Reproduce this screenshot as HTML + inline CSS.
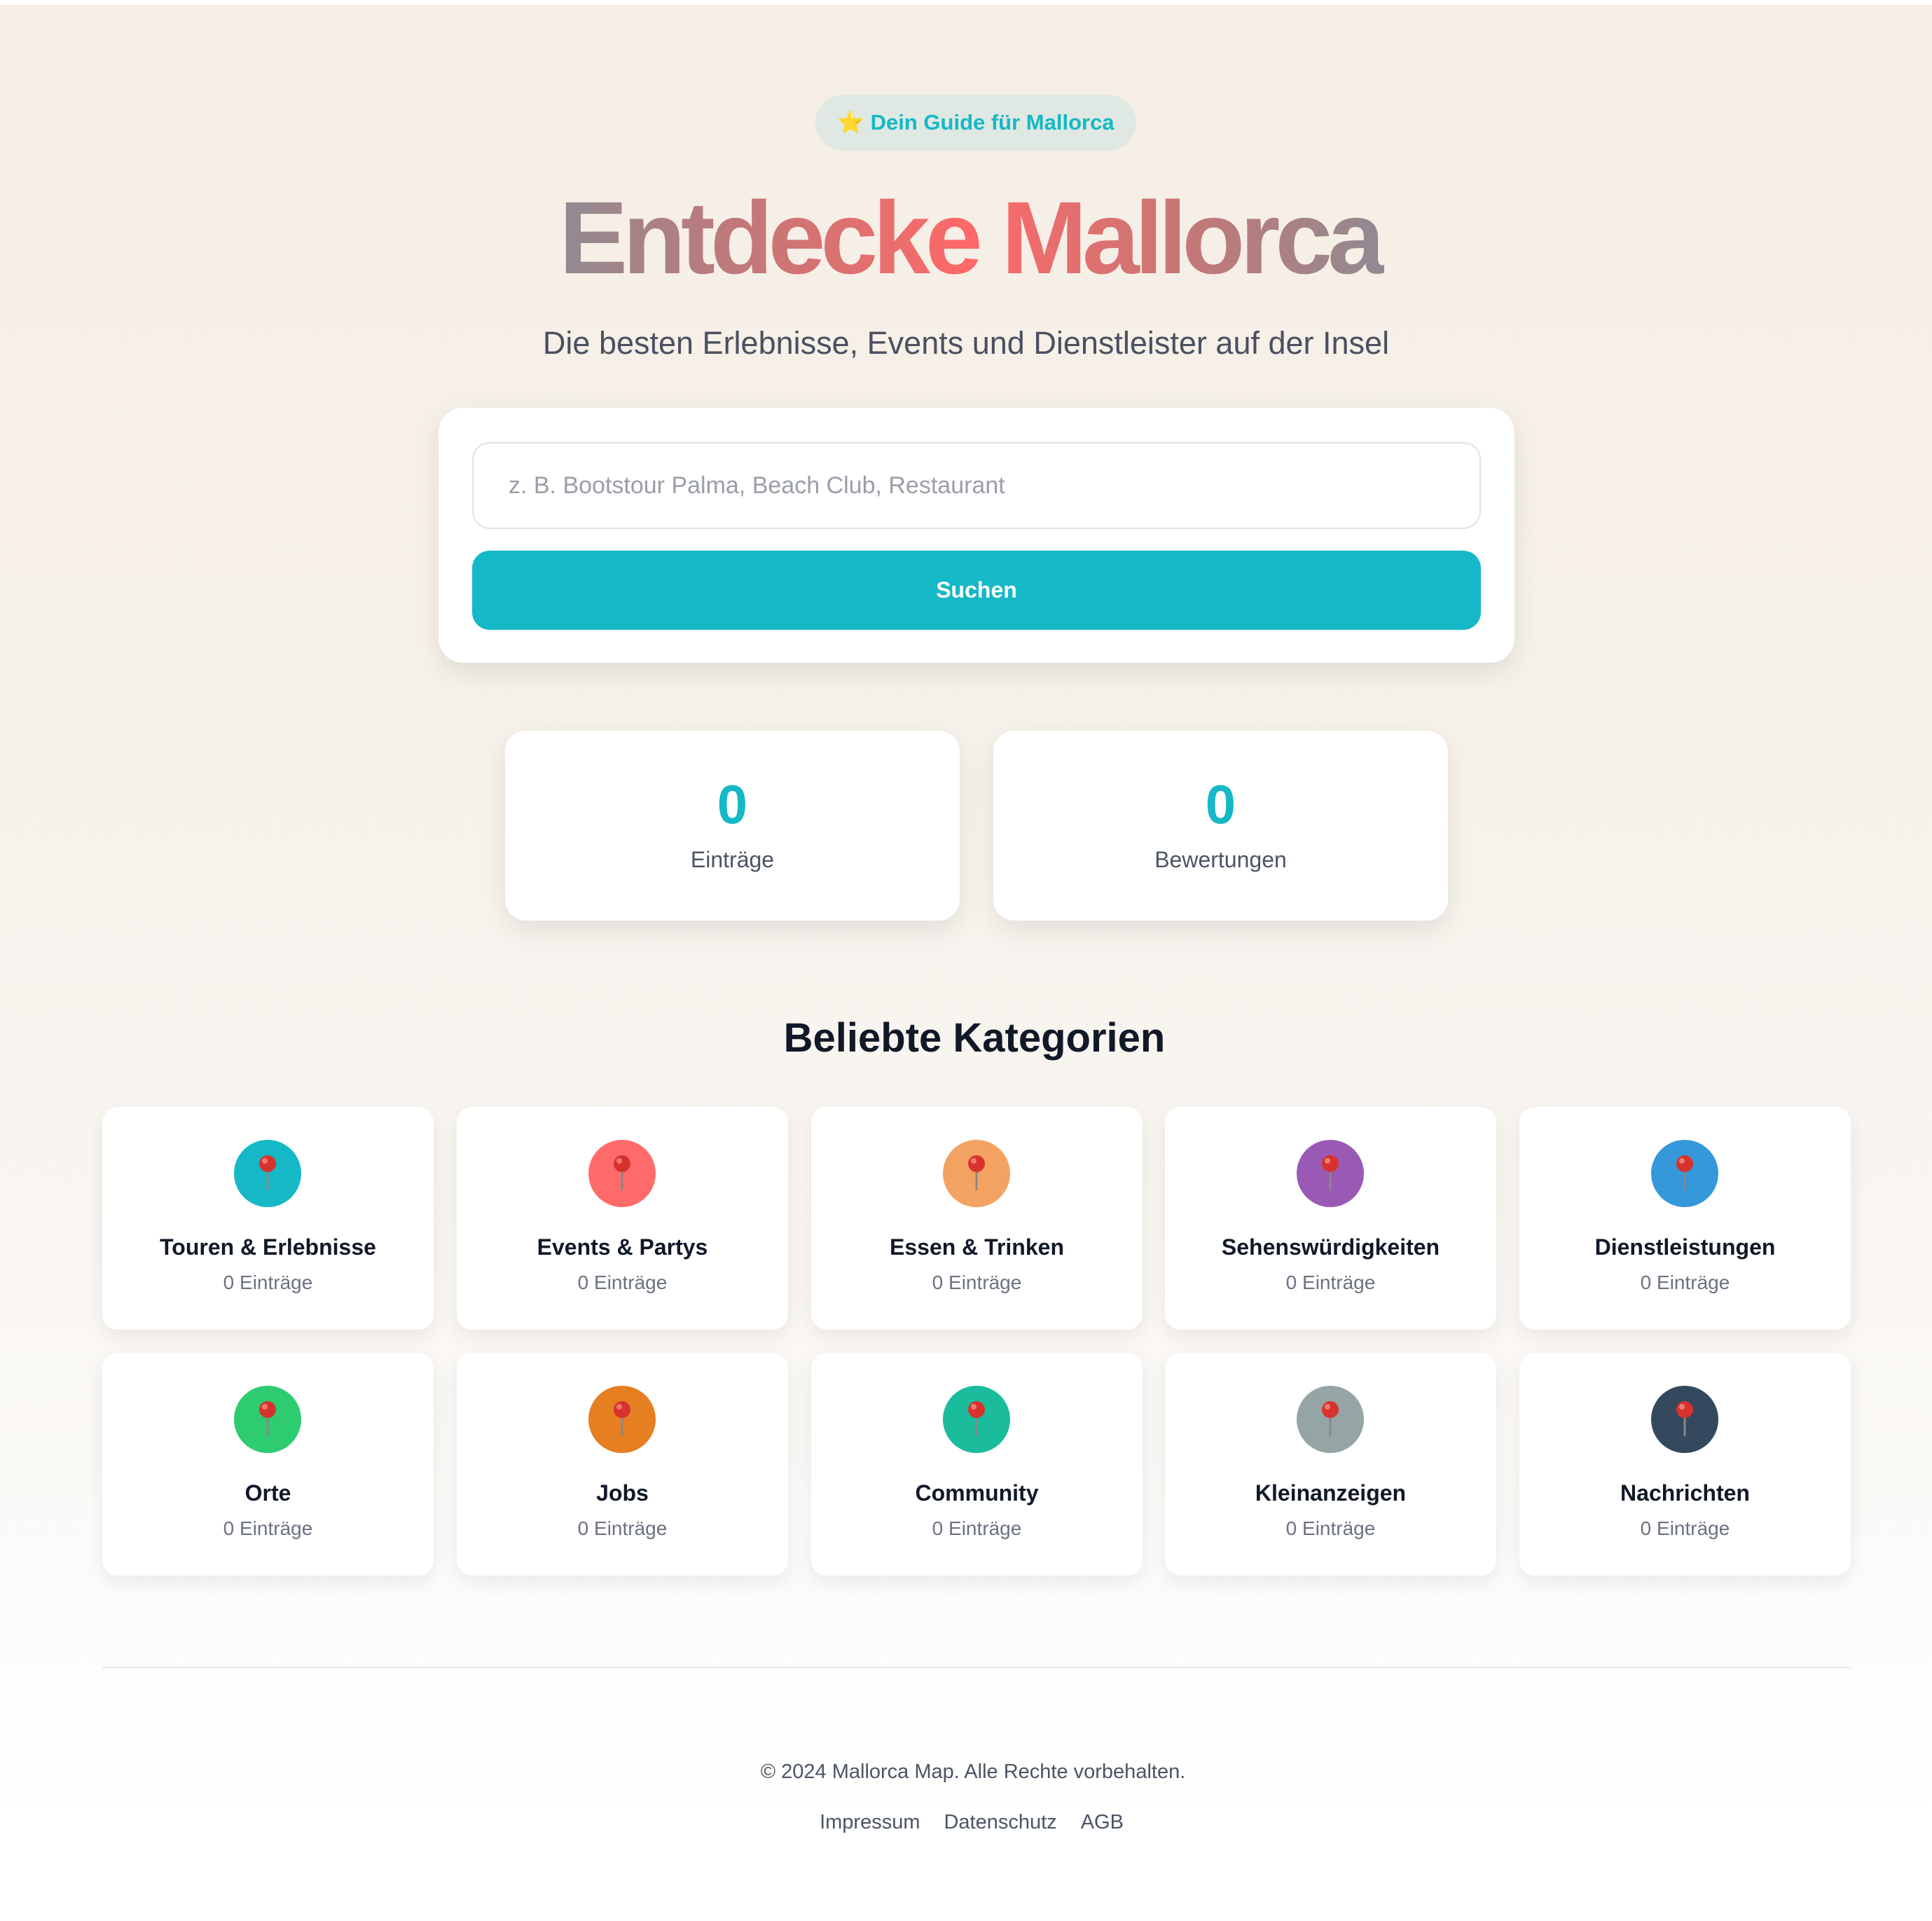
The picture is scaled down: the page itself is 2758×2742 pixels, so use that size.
<!DOCTYPE html>
<html><head><meta charset="utf-8"><style>
*{box-sizing:border-box;margin:0;padding:0}
body{width:2758px;height:2742px;overflow:hidden;font-family:"Liberation Sans",sans-serif;background:linear-gradient(#f5eee5 0px,#f6f1ea 1000px,#f9f6f2 1800px,#ffffff 2600px);position:relative}
.top{position:absolute;left:0;top:0;width:2758px;height:7px;background:#fff}
.abs{position:absolute}
.badge{left:1164px;top:135px;width:458px;height:80px;border-radius:40px;background:#dfe8e3;color:#15b8c6;font-size:31px;font-weight:bold;line-height:80px;text-align:center}
h1{position:absolute;left:0;width:2758px;top:252px;padding-left:12px;text-align:center;font-size:147px;font-weight:bold;letter-spacing:-7px;line-height:176px}
h1 span{display:inline-block;padding:0 6px 0 4px;background:linear-gradient(90deg,#8f8b93 0%,#c87676 25%,#ff6868 50%,#c87676 75%,#8f8b93 100%);-webkit-background-clip:text;background-clip:text;color:transparent}
.sub{left:0;width:2758px;top:460px;font-size:45px;color:#4a5060;text-align:center;line-height:60px}
.card{background:#fff;border-radius:35px;box-shadow:0 14px 40px rgba(0,0,0,.09)}
.input{left:674px;top:631px;width:1440px;height:124px;border:2px solid #e3e3e6;border-radius:25px;background:#fff;font-size:34px;color:#9a9ea8;line-height:120px;padding-left:50px}
.btn{left:674px;top:786px;width:1440px;height:113px;border-radius:25px;background:#15b8c6;color:#fff;font-size:32px;font-weight:bold;line-height:113px;text-align:center}
.stat{width:649px;height:271px;top:1043px;border-radius:30px;text-align:center}
.stat .n{position:absolute;left:0;right:0;top:60px;font-size:78px;font-weight:bold;color:#15b8c6;line-height:90px}
.stat .l{position:absolute;left:0;right:0;top:164px;font-size:32px;color:#4b5563;line-height:40px}
h2{position:absolute;left:12px;width:2758px;top:1446px;text-align:center;font-size:58px;font-weight:bold;color:#111827;line-height:72px}
.cat{width:473px;height:318px;border-radius:22px;text-align:center;box-shadow:0 10px 28px rgba(0,0,0,.07)}
.cat .ic{position:absolute;left:188px;top:47px;width:96px;height:96px;border-radius:50%}
.cat .ic svg{position:absolute;left:0;top:0}
.cat .t{position:absolute;left:0;right:0;top:180px;font-size:32px;font-weight:bold;color:#111827;line-height:40px}
.cat .s{position:absolute;left:0;right:0;top:233px;font-size:28px;color:#6b7280;line-height:36px}
.line{left:146px;top:2379px;width:2496px;height:2px;background:#e8e8ea}
.copy{left:10px;width:2758px;top:2511px;text-align:center;font-size:29px;color:#4b5563;line-height:36px}
.links{left:8px;width:2758px;top:2583px;text-align:center;font-size:29px;color:#4b5563;line-height:36px}
.links span{margin:0 17px}
</style></head><body>
<div class="top"></div>
<div class="abs badge">⭐ Dein Guide für Mallorca</div>
<h1><span>Entdecke Mallorca</span></h1>
<div class="abs sub">Die besten Erlebnisse, Events und Dienstleister auf der Insel</div>
<div class="abs card" style="left:626px;top:582px;width:1536px;height:364px"></div>
<div class="abs input">z. B. Bootstour Palma, Beach Club, Restaurant</div>
<div class="abs btn">Suchen</div>
<div class="abs card stat" style="left:721px"><div class="n">0</div><div class="l">Einträge</div></div>
<div class="abs card stat" style="left:1418px"><div class="n">0</div><div class="l">Bewertungen</div></div>
<h2>Beliebte Kategorien</h2>

<div class="abs card cat" style="left:146px;top:1580px"><div class="ic" style="background:#15b8c6"><svg width="96" height="96"><line x1="48" y1="40" x2="48" y2="72" stroke="#888" stroke-width="3"/><circle cx="48" cy="34" r="12" fill="#d8322e"/><circle cx="44" cy="30" r="4" fill="#f07a72"/></svg></div><div class="t">Touren &amp; Erlebnisse</div><div class="s">0 Einträge</div></div>
<div class="abs card cat" style="left:652px;top:1580px"><div class="ic" style="background:#ff6b6b"><svg width="96" height="96"><line x1="48" y1="40" x2="48" y2="72" stroke="#888" stroke-width="3"/><circle cx="48" cy="34" r="12" fill="#d8322e"/><circle cx="44" cy="30" r="4" fill="#f07a72"/></svg></div><div class="t">Events &amp; Partys</div><div class="s">0 Einträge</div></div>
<div class="abs card cat" style="left:1158px;top:1580px"><div class="ic" style="background:#f4a261"><svg width="96" height="96"><line x1="48" y1="40" x2="48" y2="72" stroke="#888" stroke-width="3"/><circle cx="48" cy="34" r="12" fill="#d8322e"/><circle cx="44" cy="30" r="4" fill="#f07a72"/></svg></div><div class="t">Essen &amp; Trinken</div><div class="s">0 Einträge</div></div>
<div class="abs card cat" style="left:1663px;top:1580px"><div class="ic" style="background:#9b59b6"><svg width="96" height="96"><line x1="48" y1="40" x2="48" y2="72" stroke="#888" stroke-width="3"/><circle cx="48" cy="34" r="12" fill="#d8322e"/><circle cx="44" cy="30" r="4" fill="#f07a72"/></svg></div><div class="t">Sehenswürdigkeiten</div><div class="s">0 Einträge</div></div>
<div class="abs card cat" style="left:2169px;top:1580px"><div class="ic" style="background:#3498db"><svg width="96" height="96"><line x1="48" y1="40" x2="48" y2="72" stroke="#888" stroke-width="3"/><circle cx="48" cy="34" r="12" fill="#d8322e"/><circle cx="44" cy="30" r="4" fill="#f07a72"/></svg></div><div class="t">Dienstleistungen</div><div class="s">0 Einträge</div></div>

<div class="abs card cat" style="left:146px;top:1931px"><div class="ic" style="background:#2ecc71"><svg width="96" height="96"><line x1="48" y1="40" x2="48" y2="72" stroke="#888" stroke-width="3"/><circle cx="48" cy="34" r="12" fill="#d8322e"/><circle cx="44" cy="30" r="4" fill="#f07a72"/></svg></div><div class="t">Orte</div><div class="s">0 Einträge</div></div>
<div class="abs card cat" style="left:652px;top:1931px"><div class="ic" style="background:#e67e22"><svg width="96" height="96"><line x1="48" y1="40" x2="48" y2="72" stroke="#888" stroke-width="3"/><circle cx="48" cy="34" r="12" fill="#d8322e"/><circle cx="44" cy="30" r="4" fill="#f07a72"/></svg></div><div class="t">Jobs</div><div class="s">0 Einträge</div></div>
<div class="abs card cat" style="left:1158px;top:1931px"><div class="ic" style="background:#1abc9c"><svg width="96" height="96"><line x1="48" y1="40" x2="48" y2="72" stroke="#888" stroke-width="3"/><circle cx="48" cy="34" r="12" fill="#d8322e"/><circle cx="44" cy="30" r="4" fill="#f07a72"/></svg></div><div class="t">Community</div><div class="s">0 Einträge</div></div>
<div class="abs card cat" style="left:1663px;top:1931px"><div class="ic" style="background:#95a5a6"><svg width="96" height="96"><line x1="48" y1="40" x2="48" y2="72" stroke="#888" stroke-width="3"/><circle cx="48" cy="34" r="12" fill="#d8322e"/><circle cx="44" cy="30" r="4" fill="#f07a72"/></svg></div><div class="t">Kleinanzeigen</div><div class="s">0 Einträge</div></div>
<div class="abs card cat" style="left:2169px;top:1931px"><div class="ic" style="background:#34495e"><svg width="96" height="96"><line x1="48" y1="40" x2="48" y2="72" stroke="#888" stroke-width="3"/><circle cx="48" cy="34" r="12" fill="#d8322e"/><circle cx="44" cy="30" r="4" fill="#f07a72"/></svg></div><div class="t">Nachrichten</div><div class="s">0 Einträge</div></div>

<div class="abs line"></div>
<div class="abs copy">© 2024 Mallorca Map. Alle Rechte vorbehalten.</div>
<div class="abs links"><span>Impressum</span><span>Datenschutz</span><span>AGB</span></div>
</body></html>
